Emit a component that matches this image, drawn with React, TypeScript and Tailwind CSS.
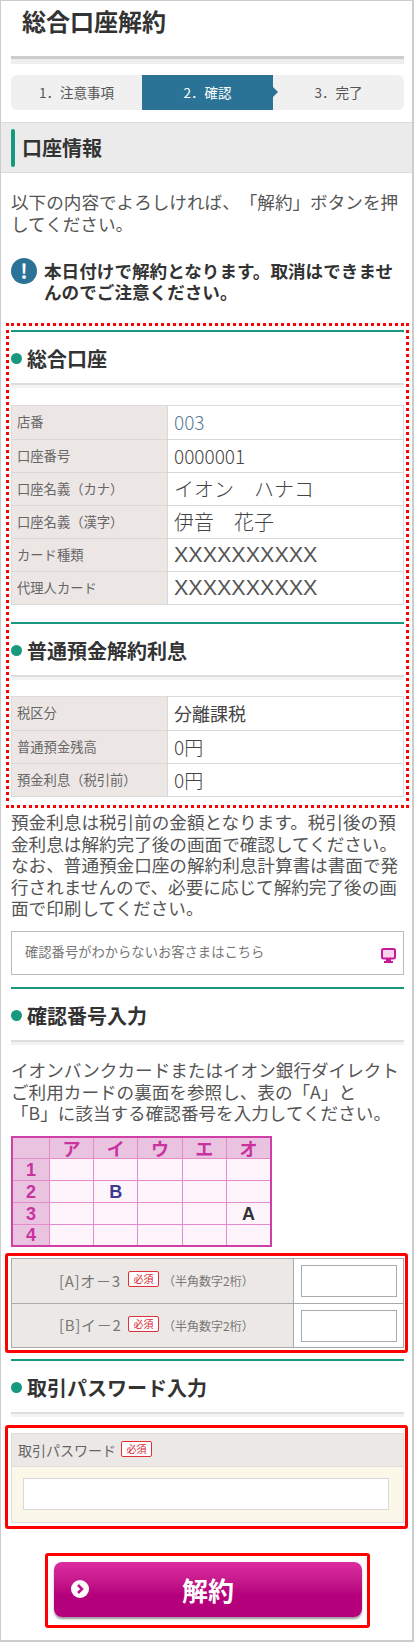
const font = "font-['Noto_Sans_CJK_JP','Liberation_Sans',sans-serif] [text-spacing-trim:space-all]"

function Heading({ children }: { children: React.ReactNode }) {
    return (
        <div className="border-t-2 border-[#16997f]">
            <div className="h-[51px] flex items-center gap-[5px]">
                <span className="w-[11px] h-[11px] rounded-full bg-[#16997f] mt-[1px]"></span>
                <h2 className="text-[20px] font-bold text-[#333] leading-none pt-[3px]">{children}</h2>
            </div>
            <div className="h-[5px] border-t-2 border-[#dedede] bg-[#f3f3f3]"></div>
        </div>
    )
}

function InfoTable({ rows }: { rows: { label: string; value: string; className?: string }[] }) {
    return (
        <div className="border border-[#dcdcdc]">
            {rows.map((row, i) => (
                <div key={row.label} className={`flex h-[33px] ${i > 0 ? "border-t border-[#d8d8d8]" : ""}`}>
                    <div className="w-[156px] bg-[#ece7e5] border-r border-[#d8d8d8] pl-[5px] pb-[1px] flex items-center text-[13.3px] text-[#666] whitespace-nowrap">
                        {row.label}
                    </div>
                    <div className={`flex-1 pl-[6px] flex items-center ${row.className ?? "text-[19px] font-light text-[#444]"}`}>
                        {row.value}
                    </div>
                </div>
            ))}
        </div>
    )
}

function Required() {
    return (
        <span className="w-[31px] h-[16px] border border-[#e0313a] rounded-[2px] bg-white text-[#d8232c] text-[10px] leading-none flex items-center justify-center">
            必須
        </span>
    )
}

function CodeRow({ label, first }: { label: string; first?: boolean }) {
    return (
        <div className={`flex h-[44px] ${first ? "" : "border-t border-[#aaa]"}`}>
            <div className="w-[282px] bg-[#ece8e5] border-r border-[#aaa] pl-[47px] flex items-center text-[#777]">
                <span className="text-[15px] tracking-[0.7px] w-[69px] whitespace-nowrap">{label}</span>
                <span className="-mt-[4px]"><Required /></span>
                <span className="text-[12px] ml-[4px] whitespace-nowrap">（半角数字2桁）</span>
            </div>
            <div className="flex-1 flex items-center justify-center">
                <input className="w-[96px] h-[32px] border border-[#aaa] bg-white" />
            </div>
        </div>
    )
}

const kana = ["ア", "イ", "ウ", "エ", "オ"]

function CodeGrid() {
    return (
        <div className="w-[261px] border-2 border-[#cf3fa5] grid grid-cols-[36px_1fr_1fr_1fr_1fr_1fr] grid-rows-[20px_21px_21px_21px_20px] gap-px bg-[#e48ccb] font-bold text-[18px] leading-none">
            <div className="bg-[#e9c3df]"></div>
            {kana.map((k) => (
                <div key={k} className="bg-[#e9c3df] text-[#c9339f] flex items-center justify-center">{k}</div>
            ))}
            {[1, 2, 3, 4].map((n) => (
                <div key={n} className="contents font-['Liberation_Sans',sans-serif]">
                    <div className="bg-[#e9c3df] text-[#c9339f] flex items-center justify-center">{n}</div>
                    {kana.map((k) => (
                        <div key={k} className="bg-[#fdf4fc] flex items-center justify-center">
                            {n === 2 && k === "イ" && <span className="text-[#3d3a8f]">B</span>}
                            {n === 3 && k === "オ" && <span className="text-[#333]">A</span>}
                        </div>
                    ))}
                </div>
            ))}
        </div>
    )
}

export default function App() {
    return (
        <div className={`${font} w-[414px] h-[1642px] bg-white border border-[#ccc] border-r-2 border-b-2 pl-[10px] pr-[8px] overflow-hidden`}>
            <div className="h-[55px] pl-[11px] pt-[2px] text-[24px] font-bold text-[#333] leading-[36px]">総合口座解約</div>
            <div className="h-[8px] border-t-[3px] border-[#ccc] bg-[#eee]"></div>

            <div className="mt-[11px] h-[35px] flex bg-[#f0f0f0] rounded-[6px] text-[13.5px] text-[#555]">
                <div className="w-[131px] flex items-center justify-center">1．注意事項</div>
                <div className="relative w-[131px] bg-[#2b7396] text-white flex items-center justify-center">
                    2．確認
                    <span className="absolute -right-[5px] top-[12px] border-y-[5px] border-y-transparent border-l-[5px] border-l-[#2b7396]"></span>
                </div>
                <div className="flex-1 flex items-center justify-center">3．完了</div>
            </div>

            <div className="mt-[12px] -ml-[10px] -mr-[8px] h-[51px] bg-[#ebebeb] border-y border-[#dcdcdc] pl-[10px] flex items-center gap-[7px]">
                <span className="w-[4px] h-[38px] rounded-[2px] bg-[#16997f]"></span>
                <h2 className="text-[20px] font-bold text-[#333]">口座情報</h2>
            </div>

            <p className="mt-[18px] text-[17.6px] leading-[22px] text-[#555]">
                以下の内容でよろしければ、「解約」ボタンを押してください。
            </p>

            <div className="mt-[25px] flex items-start gap-[7px]">
                <span className="mt-[-2px] w-[26px] h-[26px] shrink-0 rounded-full bg-[#2b7396] text-white font-bold text-[20px] leading-[26px] text-center">!</span>
                <p className="text-[17.6px] leading-[21px] font-bold text-[#333]">
                    本日付けで解約となります。取消はできませんのでご注意ください。
                </p>
            </div>

            <div className="mt-[21px] -ml-[5px] -mr-[5px] border-[3px] border-dotted border-[#f00] pl-[2px] pr-[2px] pt-[4px] pb-[8px]">
                <Heading>総合口座</Heading>
                <div className="mt-[17px]">
                    <InfoTable
                        rows={[
                            { label: "店番", value: "003", className: "text-[19px] font-light text-[#5a7a9a]" },
                            { label: "口座番号", value: "0000001" },
                            { label: "口座名義（カナ）", value: "イオン　ハナコ", className: "text-[20px] font-light text-[#444]" },
                            { label: "口座名義（漢字）", value: "伊音　花子", className: "text-[20px] font-light text-[#444]" },
                            { label: "カード種類", value: "XXXXXXXXXX", className: "text-[21.5px] text-[#555] font-['Liberation_Sans',sans-serif]" },
                            { label: "代理人カード", value: "XXXXXXXXXX", className: "text-[21.5px] text-[#555] font-['Liberation_Sans',sans-serif]" },
                        ]}
                    />
                </div>
                <div className="mt-[17px]">
                    <Heading>普通預金解約利息</Heading>
                </div>
                <div className="mt-[16px]">
                    <InfoTable
                        rows={[
                            { label: "税区分", value: "分離課税", className: "text-[18px] text-[#444]" },
                            { label: "普通預金残高", value: "0円" },
                            { label: "預金利息（税引前）", value: "0円" },
                        ]}
                    />
                </div>
            </div>

            <p className="mt-[3px] text-[17.6px] leading-[21.5px] text-[#555]">
                預金利息は税引前の金額となります。税引後の預金利息は解約完了後の画面で確認してください。なお、普通預金口座の解約利息計算書は書面で発行されませんので、必要に応じて解約完了後の画面で印刷してください。
            </p>

            <div className="mt-[12.5px] h-[44px] border border-[#bbb] pl-[13px] pr-[7px] flex items-center justify-between text-[13.3px] text-[#777]">
                <span className="-mt-[3px]">確認番号がわからないお客さまはこちら</span>
                <svg width="15" height="15" viewBox="0 0 15 15" className="mt-[5px]">
                    <rect x="1" y="1" width="13" height="9.5" rx="1.5" fill="#f6d5ec" stroke="#c9189a" strokeWidth="2" />
                    <rect x="5" y="11" width="5" height="2" fill="#c9189a" />
                    <rect x="3" y="13" width="9" height="2" fill="#c9189a" />
                </svg>
            </div>

            <div className="mt-[12px]">
                <Heading>確認番号入力</Heading>
            </div>

            <p className="mt-[14px] text-[17.6px] leading-[21.5px] text-[#555]">
                イオンバンクカードまたはイオン銀行ダイレクトご利用カードの裏面を参照し、表の「A」と<br />「B」に該当する確認番号を入力してください。
            </p>

            <div className="mt-[12.5px]">
                <CodeGrid />
            </div>

            <div className="mt-[6px] -ml-[6px] -mr-[4px] border-[3px] border-[#f00] rounded-[3px] pl-[3px] pr-[1px] py-[2px]">
                <div className="border border-[#aaa]">
                    <CodeRow label="[A]オ－3" first />
                    <CodeRow label="[B]イ－2" />
                </div>
            </div>

            <div className="mt-[6px]">
                <Heading>取引パスワード入力</Heading>
            </div>

            <div className="mt-[8px] -ml-[6px] -mr-[4px] border-[3px] border-[#f00] rounded-[3px] pl-[3px] pr-[1px] pt-[5px] pb-[3px]">
                <div className="border border-[#ddd] h-[90px]">
                    <div className="h-[33px] bg-[#ece8e5] border-b border-[#ddd] pl-[6px] flex items-center gap-[5px] text-[14px] text-[#666]">
                        取引パスワード
                        <span className="-mt-[3px]"><Required /></span>
                    </div>
                    <div className="h-[55px] bg-[#fbf8ea] pl-[11px] pt-[11px]">
                        <input className="block w-[366px] h-[32px] border border-[#d8d8d8] bg-white" />
                    </div>
                </div>
            </div>

            <div className="mt-[24px] ml-[34px] w-[325px] h-[75px] border-[3px] border-[#f00] rounded-[3px] pl-[6px] pt-[6px]">
                <button className="relative w-[308px] h-[55px] rounded-[8px] bg-gradient-to-b from-[#dc2da0] to-[#b5007c] to-60% shadow-[0_2px_2px_#999] text-white font-bold text-[26px] leading-[55px] text-center">
                    <svg width="18" height="18" viewBox="0 0 18 18" className="absolute left-[17px] top-[18px]">
                        <circle cx="9" cy="9" r="9" fill="#fff" />
                        <path d="M7 5l4 4-4 4" fill="none" stroke="#c0108a" strokeWidth="2.5" />
                    </svg>
                    解約
                </button>
            </div>
        </div>
    )
}
